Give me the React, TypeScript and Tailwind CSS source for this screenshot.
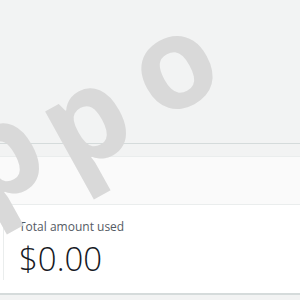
import React from 'react'

// big rotated watermark letters, each placed by the centre of its bowl
const Watermark: React.FC = () => (
  <div className="pointer-events-none absolute inset-0 select-none text-[128px] font-bold leading-none text-[#d9d9d9] [font-family:'Open_Sans',sans-serif]">
    <div className="absolute left-[6px] top-[161px]">
      <span className="inline-block origin-[45px_79px] -translate-x-[45px] -translate-y-[79px] -rotate-[29deg]">p</span>
    </div>
    <div className="absolute left-[93px] top-[126px]">
      <span className="inline-block origin-[45px_79px] -translate-x-[45px] -translate-y-[79px] -rotate-[29deg]">p</span>
    </div>
    <div className="absolute left-[176px] top-[74px]">
      <span className="inline-block origin-[38px_79px] -translate-x-[38px] -translate-y-[79px] -rotate-[29deg]">o</span>
    </div>
  </div>
)

const App: React.FC = () => {
  return (
    <div className="relative h-[300px] w-[300px] overflow-hidden bg-[#f2f3f3] [font-family:'Open_Sans',sans-serif]">
      <div className="h-[144px] border-b border-[#d5dbdb]" />
      <div className="h-[12px]" />
      <div className="h-[49px] border-y border-[#eaeded] bg-[#fafafa]" />
      <div className="h-[90px] border-b-2 border-[#d5dbdb] bg-white pt-[15px]">
        <div className="ml-[3px] h-[60px] border-l border-[#eaeded] pl-[15px]">
          <p className="text-[12px] leading-[14px] text-[#545b64]">Total amount used</p>
          <p className="mt-[5px] text-[33px] font-light leading-[40px] text-[#16191f]">$0.00</p>
        </div>
      </div>
      <Watermark />
    </div>
  )
}

export default App
